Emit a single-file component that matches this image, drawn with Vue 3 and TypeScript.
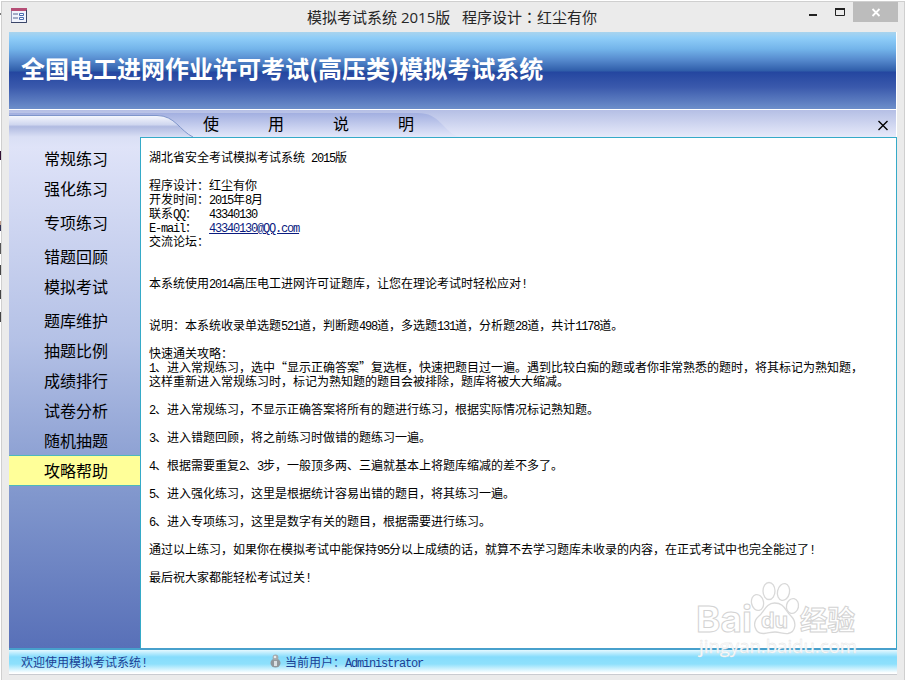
<script setup lang="ts">
interface Segment { text: string; latin: boolean; link: boolean }

const menuGroups: string[][] = [
  ['常规练习', '强化练习'],
  ['专项练习'],
  ['错题回顾', '模拟考试'],
  ['题库维护', '抽题比例', '成绩排行', '试卷分析', '随机抽题', '攻略帮助'],
]
const activeItem = '攻略帮助'

const tabTitle: string[] = ['使', '用', '说', '明']

const email = '43340130@QQ.com'

const helpText = `湖北省安全考试模拟考试系统 2015版

程序设计：红尘有你
开发时间：2015年8月
联系QQ：  43340130
E-mail：  |43340130@QQ.com|
交流论坛：


本系统使用2014高压电工进网许可证题库，让您在理论考试时轻松应对!


说明：本系统收录单选题521道，判断题498道，多选题131道，分析题28道，共计1178道。

快速通关攻略：
1、进入常规练习，选中“显示正确答案”复选框，快速把题目过一遍。遇到比较白痴的题或者你非常熟悉的题时，将其标记为熟知题，
这样重新进入常规练习时，标记为熟知题的题目会被排除，题库将被大大缩减。

2、进入常规练习，不显示正确答案将所有的题进行练习，根据实际情况标记熟知题。

3、进入错题回顾，将之前练习时做错的题练习一遍。

4、根据需要重复2、3步，一般顶多两、三遍就基本上将题库缩减的差不多了。

5、进入强化练习，这里是根据统计容易出错的题目，将其练习一遍。

6、进入专项练习，这里是数字有关的题目，根据需要进行练习。

通过以上练习，如果你在模拟考试中能保持95分以上成绩的话，就算不去学习题库未收录的内容，在正式考试中也完全能过了!

最后祝大家都能轻松考试过关!`

// Half-width runs get their own font so that every character sits on a 6px grid.
function split(line: string): Segment[] {
  return line
    .split('|')
    .flatMap((part) => part.split(/([\x20-\x7e]+)/))
    .filter((t) => t.length > 0)
    .map((t) => ({ text: t, latin: /^[\x20-\x7e]+$/.test(t), link: t === email }))
}

const lines: Segment[][] = helpText.split('\n').map(split)
</script>

<template>
  <div class="desktop">
    <div class="behind"></div>
    <div class="window">
      <header class="titlebar">
        <svg class="form-icon" width="17" height="16" viewBox="0 0 17 16">
          <rect x="0.5" y="0.5" width="15" height="14" fill="#f1f4fd" stroke="#8d93b5" />
          <rect x="0" y="0" width="16" height="3" fill="#b54e76" />
          <path d="M2 6h5M2 10h5" stroke="#55628f" />
          <path d="M8.500 5.500h4v2h-4zM8.500 9.500h4v2h-4z" fill="#fff" stroke="#4a6db0" />
          <path d="M0 14.500h15.500V2" fill="none" stroke="#3a4668" />
        </svg>
        <div class="caption">模拟考试系统 2015版&nbsp;&nbsp; 程序设计<span class="colon">：</span>红尘有你</div>
        <div class="controls">
          <svg width="67" height="20" viewBox="0 0 67 20">
            <rect x="23" y="12" width="8" height="2" fill="#222" />
            <path d="M49.500 7v6.500h9V7" fill="none" stroke="#222" />
            <rect x="49" y="6" width="10" height="2" fill="#222" />
          </svg>
          <div class="close">
            <svg width="10" height="9" viewBox="0 0 10 9">
              <path d="M1.500 1l7 7M8.500 1l-7 7" stroke="#fff" stroke-width="1.800" />
            </svg>
          </div>
        </div>
      </header>

      <div class="client">
        <div class="banner"><h1>全国电工进网作业许可考试(高压类)模拟考试系统</h1></div>

        <div class="tabs">
          <svg class="tab-shape" width="888" height="27" viewBox="0 0 888 27">
            <defs>
              <linearGradient id="tab" x1="0" y1="0" x2="0" y2="1">
                <stop offset="0" stop-color="#a2afe0" />
                <stop offset="1" stop-color="#e4e8fa" />
              </linearGradient>
              <linearGradient id="side" x1="0" y1="0" x2="0" y2="1">
                <stop offset="0" stop-color="#f6f8fe" />
                <stop offset="0.420" stop-color="#d0d7ef" />
                <stop offset="0.520" stop-color="#b1bbe1" />
                <stop offset="1" stop-color="#dadff5" />
              </linearGradient>
            </defs>
            <path d="M0 3H408C432 3 432 20 450 27H0Z" fill="url(#tab)" />
            <path d="M0 5.500H148C166 5.500 171 21 184 27H0Z" fill="url(#side)" />
            <path d="M0 5.500H148C166 5.500 171 21 184 27" fill="none" stroke="#7f95ca" />
          </svg>
          <div class="tab-title"><span v-for="c in tabTitle" :key="c">{{ c }}</span></div>
          <svg class="tab-close" width="12" height="11" viewBox="0 0 12 11">
            <path d="M1.500 1l9 9M10.500 1l-9 9" stroke="#000" stroke-width="1.400" />
          </svg>
        </div>

        <div class="main">
          <nav class="sidebar">
            <div v-for="(group, i) in menuGroups" :key="i" class="group">
              <div v-for="item in group" :key="item" class="item" :class="{ active: item === activeItem }">{{ item }}</div>
            </div>
          </nav>
          <article class="content">
            <p v-for="(line, i) in lines" :key="i">
              <span v-for="(s, j) in line" :key="j" :class="{ latin: s.latin, link: s.link }">{{ s.text }}</span>
            </p>
          </article>
        </div>

        <footer class="status">
          <div class="welcome">欢迎使用模拟考试系统<span class="latin">!</span></div>
          <svg class="user" width="11" height="14" viewBox="0 0 11 14">
            <ellipse cx="5.500" cy="9" rx="5" ry="4.600" fill="#8f979b" />
            <circle cx="5.500" cy="3.400" r="2.900" fill="#a3aaad" />
            <circle cx="5" cy="3" r="1.300" fill="#e6eaec" />
            <path d="M4 7h3v5H4z" fill="#d9dfe2" />
          </svg>
          <div>当前用户：<span class="latin">Administrator</span></div>
        </footer>
      </div>
    </div>

    <svg class="watermark" width="175" height="90" viewBox="0 0 175 90">
      <g fill="#fff" stroke="#d9d9d9" stroke-width="1.300">
        <ellipse cx="70.500" cy="27.500" rx="6" ry="8" transform="rotate(-12 70.500 27.500)" />
        <ellipse cx="82" cy="16" rx="6" ry="8.500" />
        <ellipse cx="96.500" cy="17" rx="6" ry="8.500" transform="rotate(12 96.500 17)" />
        <ellipse cx="105.500" cy="31" rx="6" ry="7.500" transform="rotate(12 105.500 31)" />
        <path d="M87.500 28C79 28 77 37 72 41C64 48 68 59 77 58.500C82 58 84 57 88 57C93 57 96 59 101 58.500C109 57 110 47 104 41C98 36 98 28 87.500 28Z" />
      </g>
      <g class="wm-text">
        <text class="wm-latin" x="9" y="57" font-size="36" textLength="56" lengthAdjust="spacingAndGlyphs">Bai</text>
        <text class="wm-latin" x="74" y="53" font-size="21" textLength="27" lengthAdjust="spacingAndGlyphs">du</text>
        <text x="113" y="55" font-size="27" textLength="55" lengthAdjust="spacingAndGlyphs">经验</text>
      </g>
      <text class="wm-url" x="12" y="78" textLength="158" lengthAdjust="spacingAndGlyphs">jingyan.baidu.com</text>
    </svg>
  </div>
</template>

<style>
body { margin: 0; background: #fff; }
</style>

<style scoped>
.desktop {
  position: relative;
  width: 907px;
  height: 680px;
  overflow: hidden;
  display: flex;
  background: #fff;
  font-family: "Noto Sans CJK SC", sans-serif;
  text-spacing-trim: space-all;
  color: #000;
}
.behind {
  width: 1px;
  height: 330px;
  background: linear-gradient(#fff 13px, #777 13px 15px, #fff 15px 151px, #313 151px 160px, #fff 160px 221px, #b98 221px 225px, #335 225px 231px, #fff 231px 243px, #555 243px 254px, #fff 254px 265px, #444 265px 275px, #fff 275px 290px, #444 290px 299px, #fff 299px 312px, #444 312px 322px, #fff 322px);
}
.window {
  box-sizing: border-box;
  width: 904px;
  height: 679px;
  margin-top: 1px;
  border: 1px solid #cfcfcf;
  border-bottom: 0;
  background: #ebebeb;
}
.titlebar {
  display: grid;
  grid-template-columns: 290px 1fr 112px;
  height: 30px;
  padding: 0 6px 0 9px;
}
.form-icon { margin-top: 6px; }
.caption {
  margin-left: 6px;
  font-family: "Open Sans", "Noto Sans CJK SC", sans-serif;
  font-size: 15px;
  line-height: 29px;
  color: #262626;
  white-space: nowrap;
}
.colon { font-family: "Noto Sans CJK JP", sans-serif; }
.controls { display: flex; height: 20px; }
.close {
  width: 45px;
  height: 20px;
  display: flex;
  align-items: center;
  justify-content: center;
  background: #bcbcbc;
}
.client {
  width: 888px;
  margin-left: 7px;
  border-bottom: 1px solid #c9cbd0;
  background: #fff;
}
.banner {
  display: flex;
  align-items: center;
  width: 887px;
  height: 77px;
  background: linear-gradient(#a9d4ee 0, #8fcdf8 6px, #73b4ea 17px, #5589cd 28px, #2f5da9 39px, #2446a0 40px, #3a59ac 55px, #6b8cc9 76px);
}
h1 {
  margin: 0 0 6px 12px;
  font-size: 24px;
  line-height: 30px;
  font-weight: 700;
  color: #fff;
  white-space: nowrap;
}
.tabs {
  position: relative;
  display: flex;
  width: 887px;
  height: 27px;
  border-top: 1px solid #fff;
  background: linear-gradient(#b5bfe5, #e7eafa);
}
.tab-shape { position: absolute; left: 0; top: 0; }
.tab-title {
  position: relative;
  display: flex;
  gap: 49px;
  height: 27px;
  margin-left: 194px;
  font-size: 16px;
  line-height: 27px;
}
.tab-close { position: relative; margin: 10px 7px 0 auto; }
.main { display: flex; height: 511px; border-bottom: 2px solid #47a0cc; }
.sidebar {
  width: 131px;
  padding-top: 7px;
  box-sizing: border-box;
  display: flex;
  flex-direction: column;
  gap: 4px;
  background: linear-gradient(#dadff5, #dfe3f8 10px, #b4c1e6 40%, #8197cd 70%, #5870b8);
}
.item {
  box-sizing: border-box;
  height: 30px;
  padding-left: 35px;
  font-size: 16px;
  line-height: 28px;
}
.active {
  height: 31px;
  margin-top: -1px;
  border: solid #4cb9bc;
  border-width: 1px 0;
  background: #ffff99;
}
.content {
  box-sizing: border-box;
  width: 757px;
  padding: 12px 0 0 8px;
  border: solid #35aac8;
  border-width: 1px 1px 0 1px;
  background: #fff;
  font-size: 12px;
}
.content p {
  height: 14px;
  margin: 0;
  line-height: 14px;
  white-space: nowrap;
}
.content span { white-space: pre; }
.content .latin, .latin {
  font-family: "Liberation Mono", monospace;
  font-size: 12px;
  line-height: 12px;
  letter-spacing: -1.2px;
  vertical-align: 0.5px;
}
.link { color: #0b1b7f; text-decoration: underline; }
.status {
  display: flex;
  height: 24px;
  padding-left: 12px;
  background: linear-gradient(#e4f8ff, #85dcfc 7px, #8ee0fc 14px, #fff 23px);
  font-size: 12px;
  line-height: 23px;
  color: #1c3f94;
}
.welcome { width: 249px; }
.user { margin: 4px 4px 0 0; }
.watermark { position: absolute; left: 687px; top: 575px; }
.wm-text {
  font-family: "Noto Sans CJK SC", sans-serif;
  font-weight: 700;
  fill: #fff;
  stroke: #d3d3d3;
  stroke-width: 1px;
}
.wm-latin { font-family: Inter, sans-serif; }
.wm-url {
  font-family: "Open Sans", sans-serif;
  font-size: 19px;
  fill: #fff;
  stroke: #e2e2e2;
  stroke-width: 0.4px;
}
</style>
